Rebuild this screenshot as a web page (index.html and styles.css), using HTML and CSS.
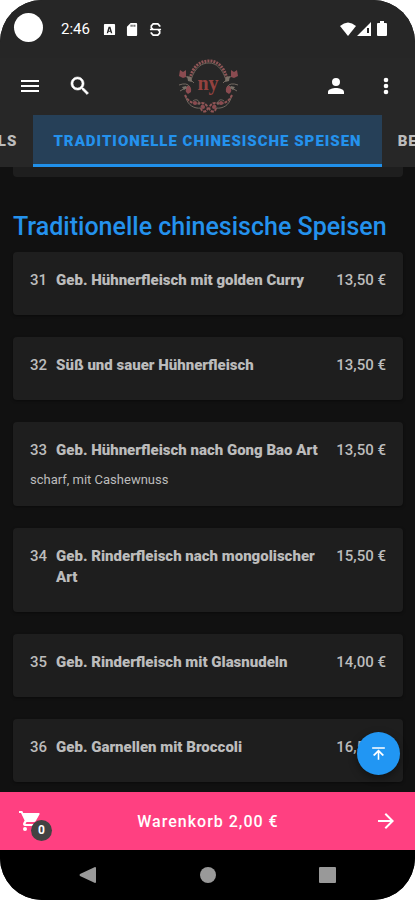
FILE: index.html
```html
<!DOCTYPE html>
<html lang="de">
<head>
    <meta charset="UTF-8">
    <meta name="viewport" content="width=device-width, initial-scale=1.0">
    <title>Speisekarte</title>
    <link rel="stylesheet" href="styles.css">
</head>
<body>
    <div class="screen">
        <div class="status">
            <span class="camera"></span>
            <span class="clock">2:46</span>
            <svg class="status-icon" viewBox="0 0 14 16"><path fill="#fff" fill-rule="evenodd" d="M2 2h10a1 1 0 0 1 1 1v10a1 1 0 0 1-1 1H2a1 1 0 0 1-1-1V3a1 1 0 0 1 1-1zm4 3-2 7h1.500l.4-1.500h2.200l.4 1.500H10L8 5zm1 2 .7 2.300H6.300z"/></svg>
            <svg class="status-icon" viewBox="0 0 14 16"><path fill="#fff" fill-rule="evenodd" d="M5 1h6a1 1 0 0 1 1 1v12a1 1 0 0 1-1 1H2a1 1 0 0 1-1-1V5zm0 2v2h1V3zm2 0v2h1V3zm2 0v2h1V3z"/></svg>
            <svg class="status-icon" viewBox="0 0 14 16"><path fill="none" stroke="#fff" stroke-width="1.800" d="M11.500 5V4l-2-2h-5l-2 2v2l2 2h5l2 2v2l-2 2h-5l-2-2v-1M1 8h12"/></svg>
            <svg class="signal" viewBox="0 0 50 18"><path fill="#fff" d="M1 6Q9-1 17 6L9 16z"/><path fill="#fff" fill-rule="evenodd" d="M18 16 32 2v14zm10-8v5h2V8z"/><path fill="#fff" d="M39 3h2V1h4v2h2a1 1 0 0 1 1 1v11a1 1 0 0 1-1 1h-8a1 1 0 0 1-1-1V4a1 1 0 0 1 1-1z"/></svg>
        </div>

        <header class="toolbar">
            <div class="tools">
                <button class="icon-btn" aria-label="Menü">
                    <svg viewBox="0 0 24 24"><path d="M3 18h18v-2H3v2zm0-5h18v-2H3v2zm0-7v2h18V6H3z"/></svg>
                </button>
                <button class="icon-btn" aria-label="Suche">
                    <svg viewBox="0 0 24 24"><path stroke="currentColor" stroke-width=".6" d="M15.500 14h-.79l-.28-.27C15.410 12.590 16 11.110 16 9.500 16 5.910 13.090 3 9.500 3S3 5.910 3 9.500 5.910 16 9.500 16c1.610 0 3.090-.59 4.230-1.570l.27.28v.79l5 4.990L20.490 19l-4.990-5zm-6 0C7.010 14 5 11.990 5 9.500S7.010 5 9.500 5 14 7.010 14 9.500 11.990 14 9.500 14z"/></svg>
                </button>
            </div>
            <a class="logo" href="#" aria-label="Startseite">
                <svg viewBox="0 0 60 56">
                    <g fill="none" stroke="#8f5556">
                        <path stroke-width="3" stroke-dasharray="2 1" d="M12 21C15 7 23 3 31 3s15 5 18 18"/>
                        <path stroke="#696158" d="M13 22C17 9 24 5 31 5s13 5 17 17"/>
                        <path stroke-width="2" stroke-dasharray="3 1" d="M7 37c4 9 11 9 16 8s9 6 5 8-7-3-3-6M54 37c-4 9-11 9-16 8s-9 6-5 8 7-3 3-6"/>
                        <path stroke="#746a62" d="M8 40c2 7 8 11 15 10M53 40c-2 7-8 11-15 10M15 43c4-3 7 0 6 4M46 43c-4-3-7 0-6 4"/>
                        <path stroke="#746a62" d="M5 17q6 2 11 8M1 27q8-3 11 2M2 33l7-4M56 17q-6 2-11 8M60 27q-8-3-11 2M59 33l-7-4"/>
                    </g>
                    <g fill="#8a4b50">
                        <path d="M2 12l3 2 3-2v7l-3 1-4-2zM59 12l-3 2-3-2v7l3 1 4-2z"/>
                        <path d="M9 28q5-1 4 6l-3 2q-4-3-1-8zM52 28q-5-1-4 6l3 2q4-3 1-8z"/>
                        <circle cx="17" cy="45" r="2"/><circle cx="43" cy="45" r="2"/>
                        <circle cx="25" cy="49" r="2"/><circle cx="36" cy="49" r="2"/>
                    </g>
                    <g fill="#797067">
                        <path d="M9 18l4 1 1 5-4-1zM52 18l-4 1-1 5 4-1zM4 29l4-1 1 2-3 2zM57 29l-4-1-1 2 3 2z"/>
                    </g>
                    <text x="30" y="32" text-anchor="middle">ny</text>
                </svg>
            </a>
            <div class="tools tools-right">
                <button class="icon-btn" aria-label="Konto">
                    <svg viewBox="0 0 24 24"><path d="M12 12a4 4 0 1 0 0-8 4 4 0 0 0 0 8zm0 2c-3 0-8 1-8 4v2h16v-2c0-3-5-4-8-4z"/></svg>
                </button>
                <button class="icon-btn" aria-label="Mehr">
                    <svg viewBox="0 0 24 24"><circle cx="12" cy="6" r="2.300"/><circle cx="12" cy="12" r="2.300"/><circle cx="12" cy="18" r="2.300"/></svg>
                </button>
            </div>
        </header>

        <nav class="tabs">
            <a class="tab tab-prev" href="#specials">SPECIALS</a>
            <a class="tab is-active" href="#chinesisch">TRADITIONELLE CHINESISCHE SPEISEN</a>
            <a class="tab" href="#beilagen">BEILAGEN</a>
        </nav>

        <main class="content">
            <div class="card-end"></div>
            <h2 id="chinesisch">Traditionelle chinesische Speisen</h2>
            <ul class="dishes">
                <li class="card">
                    <div class="dish"><span>31</span><h3>Geb. Hühnerfleisch mit golden Curry</h3><span class="price">13,50 €</span></div>
                </li>
                <li class="card">
                    <div class="dish"><span>32</span><h3>Süß und sauer Hühnerfleisch</h3><span class="price">13,50 €</span></div>
                </li>
                <li class="card">
                    <div class="dish"><span>33</span><h3>Geb. Hühnerfleisch nach Gong Bao Art</h3><span class="price">13,50 €</span></div>
                    <p>scharf, mit Cashewnuss</p>
                </li>
                <li class="card">
                    <div class="dish"><span>34</span><h3>Geb. Rinderfleisch nach mongolischer Art</h3><span class="price">15,50 €</span></div>
                </li>
                <li class="card">
                    <div class="dish"><span>35</span><h3>Geb. Rinderfleisch mit Glasnudeln</h3><span class="price">14,00 €</span></div>
                </li>
                <li class="card">
                    <div class="dish"><span>36</span><h3>Geb. Garnellen mit Broccoli</h3><span class="price">16,50 €</span></div>
                </li>
            </ul>
        </main>

        <div class="bottom">
            <button class="to-top" aria-label="Nach oben">
                <svg viewBox="0 0 24 24"><path d="M4 4h16v2H4zM11 20V11l-4 4-2-1 7-7 7 7-2 1-4-4v9z"/></svg>
            </button>
            <button class="cart">
                <span class="cart-icon">
                    <svg viewBox="0 0 24 24"><path d="M7 18a2 2 0 1 0 0 4 2 2 0 0 0 0-4zM1 2v2h2l3.600 7.590-1.350 2.450C4.520 15.370 5.480 17 7 17h12v-2H7.420l1.130-2h7.450c.75 0 1.410-.41 1.750-1.030L21.700 5A1 1 0 0 0 20.800 4H5.210l-.94-2H1zm16 16a2 2 0 1 0 0 4 2 2 0 0 0 0-4z"/></svg>
                    <span class="badge">0</span>
                </span>
                <span class="cart-text">Warenkorb 2,00 €</span>
                <svg class="arrow" viewBox="0 0 24 24"><path d="M12 4l-1.410 1.410L16.170 11H4v2h12.170l-5.580 5.590L12 20l8-8z"/></svg>
            </button>
        </div>

        <div class="system-nav">
            <button aria-label="Zurück"><svg viewBox="0 0 18 18"><path d="M16 1q1 0 1 1v14q0 1-1 1L1 10q-1-1 0-2z"/></svg></button>
            <button aria-label="Home"><svg viewBox="0 0 18 18"><circle cx="9" cy="9" r="8"/></svg></button>
            <button aria-label="Übersicht"><svg viewBox="0 0 18 18"><rect x="0" y="1" width="17" height="16" rx="1"/></svg></button>
        </div>
    </div>
</body>
</html>
```

FILE: styles.css
```css
* {
    margin: 0;
    padding: 0;
    box-sizing: border-box;
}
body {
    background-color: #fff;
    font-family: Roboto, "Liberation Sans", sans-serif;
    font-size: 15px;
    line-height: 21px;
    color: #bcbcbc;
}
button {
    border: 0;
    background: none;
    font: inherit;
    color: inherit;
    cursor: pointer;
}
svg {
    display: block;
    fill: currentColor;
}
a {
    color: inherit;
    text-decoration: none;
}
.screen {
    height: 100vh;
    display: flex;
    flex-direction: column;
    overflow: hidden;
    border-radius: 42px;
    background-color: #111;
}

/* status bar */
.status {
    display: flex;
    align-items: center;
    height: 58px;
    padding: 0 26px 0 14px;
    background-color: #262626;
    color: #fff;
}
.camera {
    width: 29px;
    height: 29px;
    margin: 0 18px 4px 0;
    border-radius: 50%;
    background-color: #fff;
}
.clock {
    margin-right: 13px;
}
.status-icon {
    width: 13px;
    height: 15px;
    margin-right: 10px;
}
.signal {
    width: 50px;
    height: 18px;
    margin-left: auto;
}

/* toolbar */
.toolbar {
    display: flex;
    align-items: center;
    height: 57px;
    padding: 0 15px 2px 16px;
    background-color: #272727;
    color: #fff;
}
.tools {
    display: flex;
    flex: 1;
    gap: 22px;
}
.tools-right {
    justify-content: flex-end;
}
.icon-btn {
    width: 28px;
    height: 28px;
    padding: 2px;
}
.logo {
    width: 60px;
}
.logo text {
    font-family: "Liberation Serif", serif;
    font-size: 20px;
    font-weight: bold;
    fill: #94423f;
}

/* tabs */
.tabs {
    display: flex;
    height: 52px;
    background-color: #272727;
    font-weight: 900;
    letter-spacing: 1px;
    white-space: nowrap;
}
.tab {
    display: flex;
    align-items: center;
    flex: 1;
    min-width: 0;
    padding: 0 16px;
    overflow: hidden;
}
.tab-prev {
    justify-content: flex-end;
}
.tab.is-active {
    flex: none;
    padding: 0 20px;
    background-color: #264058;
    box-shadow: inset 0 -3px #2090ea;
    color: #2492ed;
}

/* menu */
.content {
    flex: 1;
    min-height: 0;
    padding: 0 12px 0 13px;
    overflow: hidden;
}
.card-end {
    height: 10px;
    border-radius: 0 0 4px 4px;
    background-color: #1e1e1e;
}
h2 {
    margin: 34px 0 9px;
    font-size: 25px;
    font-weight: 500;
    line-height: 32px;
    color: #2492ed;
    white-space: nowrap;
}
.dishes {
    display: flex;
    flex-direction: column;
    gap: 22px;
    list-style: none;
}
.card {
    padding: 18px 17px 16px;
    border-radius: 4px;
    background-color: #1e1e1e;
    box-shadow: 0 1px 3px rgba(0, 0, 0, 0.4);
}
.dish {
    display: flex;
    gap: 9px;
    margin-bottom: 8px;
    font-weight: 500;
}
h3 {
    flex: 1;
    font-size: 15px;
    font-weight: 900;
}
.price {
    white-space: nowrap;
}
.card p {
    font-size: 13px;
}

/* cart */
.bottom {
    position: relative;
}
.to-top {
    position: absolute;
    right: 15px;
    bottom: 75px;
    width: 43px;
    height: 43px;
    padding: 12px;
    border-radius: 50%;
    background-color: #2196f3;
    box-shadow: 0 3px 8px rgba(0, 0, 0, 0.4);
    color: #fff;
}
.cart {
    display: flex;
    align-items: center;
    justify-content: space-between;
    width: 100%;
    height: 58px;
    padding: 0 17px 0 18px;
    background-color: #ff4081;
    color: #fff;
}
.cart-icon {
    position: relative;
}
.cart-icon svg,
.arrow {
    width: 24px;
    height: 24px;
}
.badge {
    position: absolute;
    top: 11px;
    left: 13px;
    width: 21px;
    height: 21px;
    border-radius: 50%;
    background-color: #424242;
    font-size: 12px;
    font-weight: bold;
}
.cart-text {
    font-size: 16px;
    font-weight: 500;
    letter-spacing: 1px;
}

/* system navigation */
.system-nav {
    display: flex;
    justify-content: center;
    gap: 102px;
    height: 50px;
    background-color: #000;
    color: #999;
}
.system-nav svg {
    width: 18px;
    height: 18px;
}
```
